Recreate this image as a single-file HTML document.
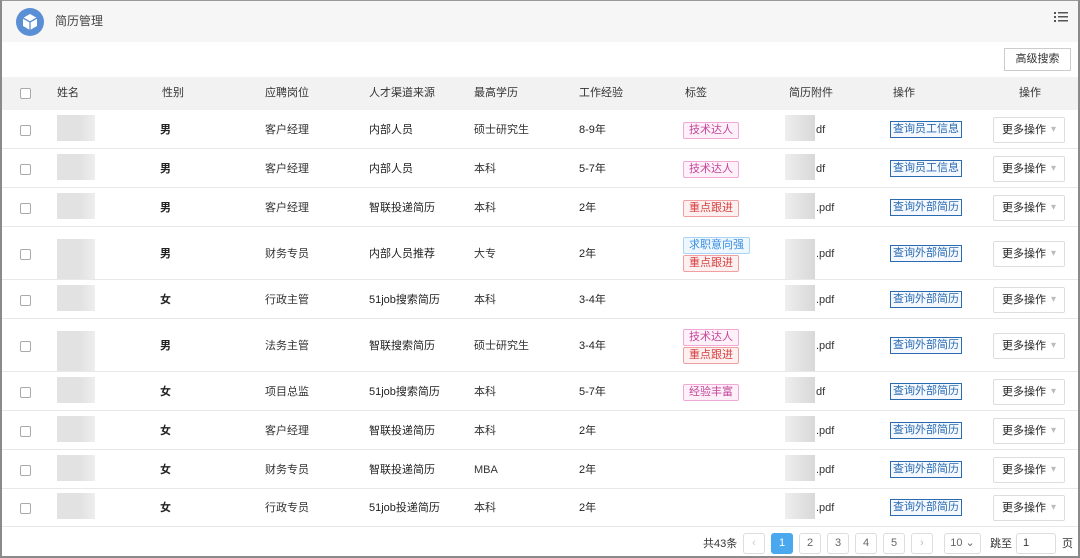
<!DOCTYPE html><html><head><meta charset="utf-8"><style>
*{margin:0;padding:0;box-sizing:border-box}
body{width:1080px;height:558px;overflow:hidden;background:#fff;font-family:"Liberation Sans","Noto Sans CJK SC",sans-serif;font-size:11px;line-height:14px;color:#333;position:relative}
.frame{position:absolute;inset:0;border:2px solid #8a8a8a;border-top:1px solid #999;pointer-events:none;z-index:9}
.top{position:absolute;left:0;top:0;width:1080px;height:42px;background:#f6f6f6}
.logo{position:absolute;left:16px;top:8px;width:28px;height:28px;border-radius:50%;background:#5a8fd6}
.title{position:absolute;left:55px;top:13px;font-size:12px;line-height:16px;color:#444}
.adv{position:absolute;left:1004px;top:48px;width:67px;height:23px;border:1px solid #ccc;background:#fff;text-align:center;line-height:21px;font-size:11px}
.thead{position:absolute;left:0;top:77px;width:1080px;height:33px;background:#f2f2f2}
.c{position:absolute;white-space:nowrap;line-height:14px}
.cb{position:absolute;left:20px;width:11px;height:11px;border:1px solid #aaa;border-radius:2px;background:#fff}
.row{position:absolute;left:0;width:1080px;border-bottom:1px solid #e8e8e8}
.blur{position:absolute;background:#ddd}
.tag{display:inline-block;font-size:11px;padding:1px 5px;border:1px solid;border-radius:2px;line-height:13px}
.pink{color:#c4479b;border-color:#f0a8d6;background:#fdf0f8}
.red{color:#d84040;border-color:#f0a0a0;background:#fdf0f0}
.blue{color:#3a8ee0;border-color:#a8d4f6;background:#eef7fe}
.opb{position:absolute;left:890px;font-size:11px;color:#2a6bb0;border:1px solid #2a6bb0;padding:1px 2px;line-height:13px;background:#f5f9ff}
.more{position:absolute;left:993px;width:72px;height:26px;border:1px solid #ddd;border-radius:2px;background:#fff;font-size:11px;line-height:24px;padding-left:8px;color:#222}
.more:after{content:"▾";position:absolute;right:8px;color:#bbb;font-size:10px}
.pg{position:absolute;top:533px;height:21px;border:1px solid #ddd;border-radius:3px;text-align:center;line-height:19px;color:#666;background:#fff}
</style></head><body>
<div class="top"><div class="logo"><svg width="28" height="28" viewBox="0 0 28 28"><path d="M14 6l7 4v8l-7 4-7-4v-8z" fill="#fff"/><path d="M7 10l7 4 7-4M14 14v8" stroke="#5a8fd6" stroke-width="1.3" fill="none"/></svg></div><div class="title">简历管理</div>
<svg style="position:absolute;left:1054px;top:11px" width="14" height="12"><g fill="#555"><rect x="0" y="1" width="2" height="2"/><rect x="0" y="5" width="2" height="2"/><rect x="0" y="9" width="2" height="2"/><rect x="4" y="1" width="10" height="1.5"/><rect x="4" y="5" width="10" height="1.5"/><rect x="4" y="9" width="10" height="1.5"/></g></svg></div>
<div class="adv">高级搜索</div>
<div class="thead"><div class="cb" style="top:11px"></div>
<span class="c" style="left:57px;top:9px">姓名</span><span class="c" style="left:162px;top:9px">性别</span><span class="c" style="left:265px;top:9px">应聘岗位</span><span class="c" style="left:369px;top:9px">人才渠道来源</span><span class="c" style="left:474px;top:9px">最高学历</span><span class="c" style="left:579px;top:9px">工作经验</span><span class="c" style="left:685px;top:9px">标签</span><span class="c" style="left:789px;top:9px">简历附件</span><span class="c" style="left:893px;top:9px">操作</span><span class="c" style="left:1019px;top:9px">操作</span></div>
<div id="rows"></div>
<span class="c" style="left:703px;top:537px;color:#333">共43条</span>
<div class="pg" style="left:743px;width:22px;color:#ccc">‹</div>
<div class="pg" style="left:771px;width:22px;background:#4aa8ee;border-color:#4aa8ee;color:#fff">1</div>
<div class="pg" style="left:799px;width:22px">2</div>
<div class="pg" style="left:827px;width:22px">3</div>
<div class="pg" style="left:855px;width:22px">4</div>
<div class="pg" style="left:883px;width:22px">5</div>
<div class="pg" style="left:911px;width:22px;color:#bbb">›</div>
<div class="pg" style="left:944px;width:37px">10 ⌄</div>
<span class="c" style="left:990px;top:537px">跳至</span>
<div class="pg" style="left:1016px;width:40px;text-align:left;padding-left:6px;color:#333">1</div>
<span class="c" style="left:1062px;top:537px">页</span>
<div class="frame"></div>
<script>
var R=[[110,39,"男","客户经理","内部人员","硕士研究生","8-9年",[["技术达人","pink"]],"df","查询员工信息"],
[149,39,"男","客户经理","内部人员","本科","5-7年",[["技术达人","pink"]],"df","查询员工信息"],
[188,39,"男","客户经理","智联投递简历","本科","2年",[["重点跟进","red"]],".pdf","查询外部简历"],
[227,53,"男","财务专员","内部人员推荐","大专","2年",[["求职意向强","blue"],["重点跟进","red"]],".pdf","查询外部简历"],
[280,39,"女","行政主管","51job搜索简历","本科","3-4年",[],".pdf","查询外部简历"],
[319,53,"男","法务主管","智联搜索简历","硕士研究生","3-4年",[["技术达人","pink"],["重点跟进","red"]],".pdf","查询外部简历"],
[372,39,"女","项目总监","51job搜索简历","本科","5-7年",[["经验丰富","pink"]],"df","查询外部简历"],
[411,39,"女","客户经理","智联投递简历","本科","2年",[],".pdf","查询外部简历"],
[450,39,"女","财务专员","智联投递简历","MBA","2年",[],".pdf","查询外部简历"],
[489,38,"女","行政专员","51job投递简历","本科","2年",[],".pdf","查询外部简历"]];
var h="";R.forEach(function(r){var t=r[0],H=r[1],m=Math.round(H/2)-7;
h+='<div class="row" style="top:'+t+'px;height:'+H+'px">';
h+='<div class="cb" style="top:'+(m+2)+'px"></div>';
h+='<div class="blur" style="left:57px;top:'+(m-8)+'px;width:38px;height:'+(H>40?40:26)+'px;background:linear-gradient(90deg,#e2e2e2 60%,#eee)"></div>';
h+='<span class="c" style="left:160px;top:'+m+'px;font-weight:bold;color:#222">'+r[2]+'</span>';
h+='<span class="c" style="left:265px;top:'+m+'px">'+r[3]+'</span>';
h+='<span class="c" style="left:369px;top:'+m+'px;color:#222">'+r[4]+'</span>';
h+='<span class="c" style="left:474px;top:'+m+'px">'+r[5]+'</span>';
h+='<span class="c" style="left:579px;top:'+m+'px;color:#222">'+r[6]+'</span>';
var tg=r[7];if(tg.length==1)h+='<span class="c tag '+tg[0][1]+'" style="left:683px;top:'+(m-1)+'px">'+tg[0][0]+'</span>';
if(tg.length==2){h+='<span class="c tag '+tg[0][1]+'" style="left:683px;top:'+(m-10)+'px">'+tg[0][0]+'</span>';h+='<span class="c tag '+tg[1][1]+'" style="left:683px;top:'+(m+8)+'px">'+tg[1][0]+'</span>';}
h+='<div class="blur" style="left:785px;top:'+(m-8)+'px;width:30px;height:'+(H>40?40:26)+'px;background:linear-gradient(90deg,#eee,#d8d8d8)"></div>';
h+='<span class="c" style="left:816px;top:'+m+'px">'+r[8]+'</span>';
h+='<span class="opb" style="top:'+(m-2)+'px">'+r[9]+'</span>';
h+='<div class="more" style="top:'+(m-6)+'px">更多操作</div></div>';});
document.getElementById("rows").innerHTML=h;
</script></body></html>
